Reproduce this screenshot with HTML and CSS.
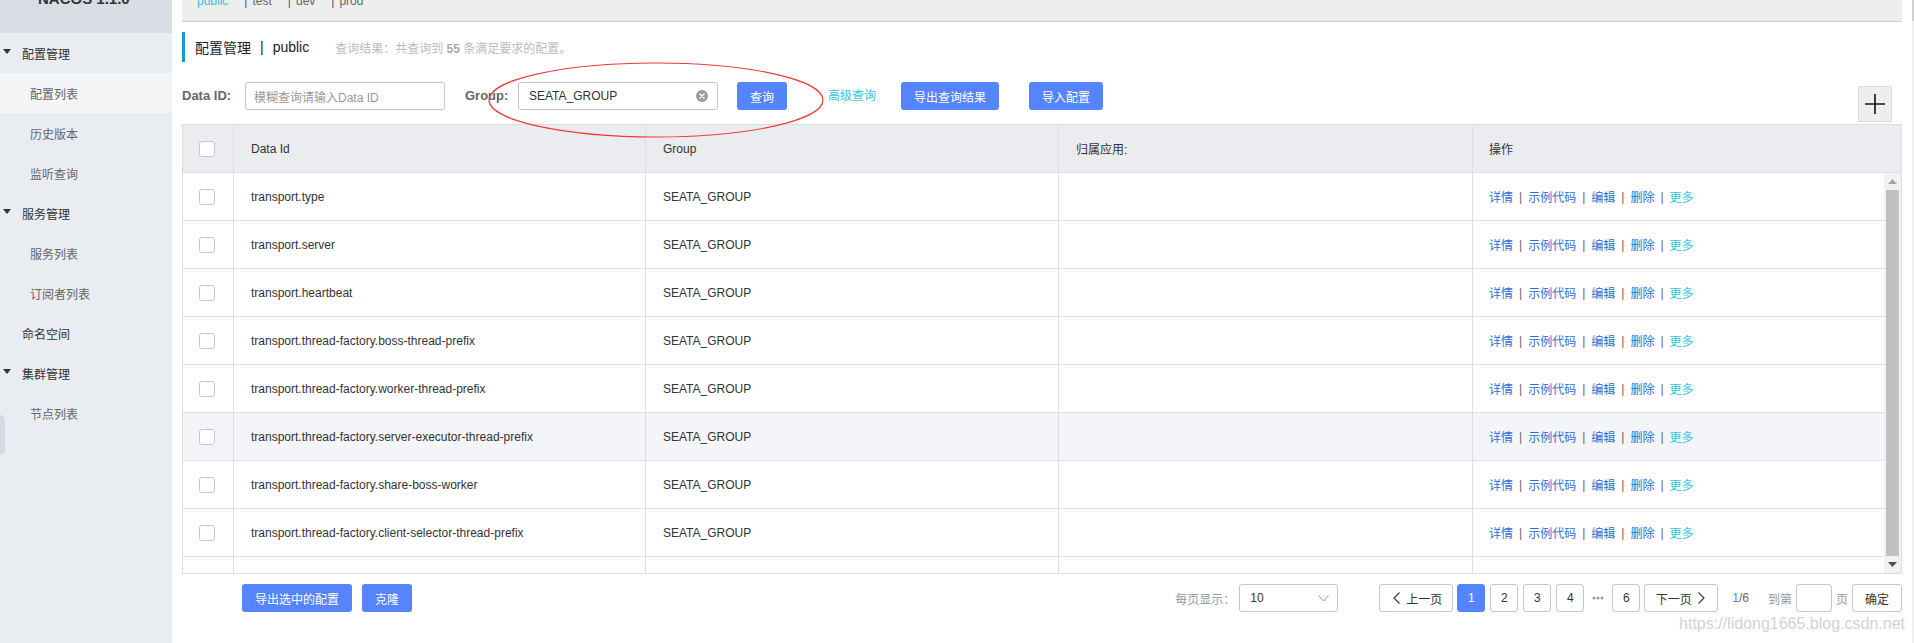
FILE: index.html
```html
<!DOCTYPE html>
<html lang="zh-CN">
<head>
<meta charset="utf-8">
<title>Nacos 配置管理</title>
<link rel="stylesheet" href="styles.css">
</head>
<body>
<aside class="sidebar">
  <div class="logo"><span class="logo-text">NACOS 1.1.0</span></div>
  <ul class="menu">
    <li class="group"><i class="caret"></i>配置管理</li>
    <li class="item active">配置列表</li>
    <li class="item">历史版本</li>
    <li class="item">监听查询</li>
    <li class="group"><i class="caret"></i>服务管理</li>
    <li class="item">服务列表</li>
    <li class="item">订阅者列表</li>
    <li class="group plain">命名空间</li>
    <li class="group"><i class="caret"></i>集群管理</li>
    <li class="item">节点列表</li>
  </ul>
  <div class="collapse-tab"></div>
</aside>

<main class="main">
  <div class="ns-bar">
    <div class="ns-list">
      <span class="ns active">public</span>
      <span class="ns-sep">|</span><span class="ns">test</span>
      <span class="ns-sep">|</span><span class="ns">dev</span>
      <span class="ns-sep">|</span><span class="ns">prod</span>
    </div>
  </div>

  <div class="page-title">
    <span class="title-main">配置管理</span>
    <span class="title-sep">|</span>
    <span class="title-ns">public</span>
    <span class="title-desc">查询结果：共查询到 <b>55</b> 条满足要求的配置。</span>
  </div>

  <div class="filters">
    <label class="f-label label-id">Data ID:</label>
    <div class="input"><span class="placeholder">模糊查询请输入Data ID</span></div>
    <label class="f-label label-group">Group:</label>
    <div class="input group-input">
      <span class="value">SEATA_GROUP</span>
      <svg class="clear" width="12" height="12" viewBox="0 0 12 12"><circle cx="6" cy="6" r="6" fill="#9b9b9b"/><path d="M3.9 3.9L8.1 8.1M8.1 3.9L3.9 8.1" stroke="#fff" stroke-width="1.4" stroke-linecap="round"/></svg>
    </div>
    <button class="btn primary btn-query">查询</button>
    <a class="adv">高级查询</a>
    <button class="btn primary btn-export">导出查询结果</button>
    <button class="btn primary btn-import">导入配置</button>
    <button class="plus-btn"><svg width="22" height="22" viewBox="0 0 22 22"><path d="M11 1V21M1 11H21" stroke="#1a1a1a" stroke-width="1.7"/></svg></button>
  </div>

  <div class="table">
    <div class="row head">
      <div class="cell cb-cell"><span class="cb"></span></div>
      <div class="cell">Data Id</div>
      <div class="cell">Group</div>
      <div class="cell">归属应用:</div>
      <div class="cell last">操作</div>
    </div>
    <div class="tbody">
      <div class="rows">
        <div class="row">
          <div class="cell cb-cell"><span class="cb"></span></div>
          <div class="cell">transport.type</div>
          <div class="cell">SEATA_GROUP</div>
          <div class="cell"></div>
          <div class="cell last ops"><a class="link">详情</a><span class="bar">|</span><a class="link">示例代码</a><span class="bar">|</span><a class="link">编辑</a><span class="bar">|</span><a class="link">删除</a><span class="bar">|</span><a class="link more">更多</a></div>
        </div>
        <div class="row">
          <div class="cell cb-cell"><span class="cb"></span></div>
          <div class="cell">transport.server</div>
          <div class="cell">SEATA_GROUP</div>
          <div class="cell"></div>
          <div class="cell last ops"><a class="link">详情</a><span class="bar">|</span><a class="link">示例代码</a><span class="bar">|</span><a class="link">编辑</a><span class="bar">|</span><a class="link">删除</a><span class="bar">|</span><a class="link more">更多</a></div>
        </div>
        <div class="row">
          <div class="cell cb-cell"><span class="cb"></span></div>
          <div class="cell">transport.heartbeat</div>
          <div class="cell">SEATA_GROUP</div>
          <div class="cell"></div>
          <div class="cell last ops"><a class="link">详情</a><span class="bar">|</span><a class="link">示例代码</a><span class="bar">|</span><a class="link">编辑</a><span class="bar">|</span><a class="link">删除</a><span class="bar">|</span><a class="link more">更多</a></div>
        </div>
        <div class="row">
          <div class="cell cb-cell"><span class="cb"></span></div>
          <div class="cell">transport.thread-factory.boss-thread-prefix</div>
          <div class="cell">SEATA_GROUP</div>
          <div class="cell"></div>
          <div class="cell last ops"><a class="link">详情</a><span class="bar">|</span><a class="link">示例代码</a><span class="bar">|</span><a class="link">编辑</a><span class="bar">|</span><a class="link">删除</a><span class="bar">|</span><a class="link more">更多</a></div>
        </div>
        <div class="row">
          <div class="cell cb-cell"><span class="cb"></span></div>
          <div class="cell">transport.thread-factory.worker-thread-prefix</div>
          <div class="cell">SEATA_GROUP</div>
          <div class="cell"></div>
          <div class="cell last ops"><a class="link">详情</a><span class="bar">|</span><a class="link">示例代码</a><span class="bar">|</span><a class="link">编辑</a><span class="bar">|</span><a class="link">删除</a><span class="bar">|</span><a class="link more">更多</a></div>
        </div>
        <div class="row hover">
          <div class="cell cb-cell"><span class="cb"></span></div>
          <div class="cell">transport.thread-factory.server-executor-thread-prefix</div>
          <div class="cell">SEATA_GROUP</div>
          <div class="cell"></div>
          <div class="cell last ops"><a class="link">详情</a><span class="bar">|</span><a class="link">示例代码</a><span class="bar">|</span><a class="link">编辑</a><span class="bar">|</span><a class="link">删除</a><span class="bar">|</span><a class="link more">更多</a></div>
        </div>
        <div class="row">
          <div class="cell cb-cell"><span class="cb"></span></div>
          <div class="cell">transport.thread-factory.share-boss-worker</div>
          <div class="cell">SEATA_GROUP</div>
          <div class="cell"></div>
          <div class="cell last ops"><a class="link">详情</a><span class="bar">|</span><a class="link">示例代码</a><span class="bar">|</span><a class="link">编辑</a><span class="bar">|</span><a class="link">删除</a><span class="bar">|</span><a class="link more">更多</a></div>
        </div>
        <div class="row">
          <div class="cell cb-cell"><span class="cb"></span></div>
          <div class="cell">transport.thread-factory.client-selector-thread-prefix</div>
          <div class="cell">SEATA_GROUP</div>
          <div class="cell"></div>
          <div class="cell last ops"><a class="link">详情</a><span class="bar">|</span><a class="link">示例代码</a><span class="bar">|</span><a class="link">编辑</a><span class="bar">|</span><a class="link">删除</a><span class="bar">|</span><a class="link more">更多</a></div>
        </div>
        <div class="row">
          <div class="cell cb-cell"><span class="cb"></span></div>
          <div class="cell">transport.thread-factory.worker-thread-size</div>
          <div class="cell">SEATA_GROUP</div>
          <div class="cell"></div>
          <div class="cell last ops"><a class="link">详情</a><span class="bar">|</span><a class="link">示例代码</a><span class="bar">|</span><a class="link">编辑</a><span class="bar">|</span><a class="link">删除</a><span class="bar">|</span><a class="link more">更多</a></div>
        </div>
      </div>
      <div class="scrollbar">
        <div class="sb-arrow"><svg width="9" height="5" viewBox="0 0 9 5"><path d="M0 5L4.5 0L9 5Z" fill="#a3a3a3"/></svg></div>
        <div class="sb-thumb"></div>
        <div class="sb-arrow"><svg width="9" height="5" viewBox="0 0 9 5"><path d="M0 0L4.5 5L9 0Z" fill="#505050"/></svg></div>
      </div>
    </div>
  </div>

  <div class="footer">
    <div class="footer-actions">
      <button class="btn primary">导出选中的配置</button>
      <button class="btn primary">克隆</button>
    </div>
    <div class="pager">
      <span class="per-page">每页显示：</span>
      <div class="select"><span>10</span><svg width="11" height="7" viewBox="0 0 11 7"><path d="M0.5 0.5L5.5 6L10.5 0.5" fill="none" stroke="#999" stroke-width="1"/></svg></div>
      <button class="pg prev"><svg width="7" height="12" viewBox="0 0 7 12"><path d="M6.5 0.5L1 6L6.5 11.5" fill="none" stroke="#333" stroke-width="1.1"/></svg>上一页</button>
      <button class="pg num first">1</button>
      <button class="pg num current-next">2</button>
      <button class="pg num">3</button>
      <button class="pg num">4</button>
      <span class="ellipsis"><svg width="12" height="4" viewBox="0 0 12 4"><circle cx="2" cy="2" r="1.5" fill="#999"/><circle cx="6" cy="2" r="1.5" fill="#999"/><circle cx="10" cy="2" r="1.5" fill="#999"/></svg></span>
      <button class="pg num">6</button>
      <button class="pg next">下一页<svg width="7" height="12" viewBox="0 0 7 12"><path d="M0.5 0.5L6 6L0.5 11.5" fill="none" stroke="#333" stroke-width="1.1"/></svg></button>
      <span class="pg-info"><em>1</em>/6</span>
      <span class="jump">到第</span>
      <div class="jump-input"></div>
      <span class="jump-unit">页</span>
      <button class="pg go">确定</button>
    </div>
  </div>
</main>

<div class="page-scroll"></div>
<svg class="annotation" width="344" height="86" viewBox="0 0 344 86"><ellipse cx="172" cy="45" rx="167" ry="37" fill="none" stroke="#ec3d3d" stroke-width="1.2"/></svg>
<div class="watermark">https://lidong1665.blog.csdn.net</div>
</body>
</html>
```

FILE: styles.css
```css
* { box-sizing: border-box; }
html, body { margin: 0; padding: 0; }
body {
  width: 1914px;
  height: 643px;
  overflow: hidden;
  position: relative;
  display: flex;
  background: #fff;
  color: #333;
  font-family: "Liberation Sans", "Noto Sans CJK SC", sans-serif;
  font-size: 12px;
}

/* Sidebar */
.sidebar {
  width: 172px;
  flex: none;
  height: 643px;
  background: #e9ecf1;
  position: relative;
}
.logo {
  height: 33px;
  background: #d8dce3;
  overflow: hidden;
  padding-left: 38px;
}
.logo-text {
  display: block;
  font-size: 15px;
  line-height: 15px;
  font-weight: bold;
  color: #333;
  margin-top: -9px;
}
.menu { list-style: none; margin: 0; padding: 0; }
.menu li {
  height: 40px;
  display: flex;
  align-items: center;
  font-size: 12px;
}
.menu .group { color: #333; padding-left: 3px; }
.menu .group.plain { padding-left: 22px; }
.menu .caret {
  width: 0; height: 0;
  border-left: 4px solid transparent;
  border-right: 4px solid transparent;
  border-top: 5px solid #333;
  margin-right: 11px;
  margin-top: -3px;
}
.menu .item { color: #666; padding-left: 30px; }
.menu .item.active { background: #f4f5f7; }
.collapse-tab {
  position: absolute;
  left: 0; top: 415px;
  width: 5px; height: 40px;
  background: #d6dae1;
  border-radius: 0 5px 5px 0;
}

/* Main */
.main {
  flex: 1;
  min-width: 0;
  padding: 0 10px 0 10px;
}
.page-scroll {
  width: 2px;
  flex: none;
  background: #f0f0f0;
  border-top: 21px solid #d0d0d0;
}
.ns-bar {
  height: 22px;
  background: #eeeeee;
  border-bottom: 1px solid #cfcfcf;
  overflow: hidden;
  padding-left: 15px;
}
.ns-list {
  display: flex;
  margin-top: -5px;
  line-height: 12px;
  font-size: 12px;
  color: #666;
}
.ns { margin-right: 16px; }
.ns.active { color: #33bde6; }
.ns-sep { margin-right: 5px; color: #555; }

.page-title {
  margin-top: 10px;
  height: 30px;
  border-left: 3px solid #129bd2;
  padding-left: 10px;
  display: flex;
  align-items: center;
  font-size: 14px;
  color: #222;
}
.title-sep { margin: 0 9px; }
.title-desc { margin-left: 26px; font-size: 12px; color: #bbb; }
.title-desc b { color: #aaa; }

.filters {
  margin-top: 20px;
  height: 40px;
  display: flex;
  align-items: flex-start;
}
.f-label {
  line-height: 28px;
  font-size: 13px;
  font-weight: bold;
  color: #666;
}
.label-id { width: 63px; }
.label-group { width: 53px; margin-left: 20px; }
.input {
  width: 200px;
  height: 28px;
  border: 1px solid #c4c6cf;
  border-radius: 3px;
  display: flex;
  align-items: center;
  padding: 0 9px 0 8px;
  background: #fff;
}
.placeholder { color: #999; }
.group-input { padding-left: 10px; }
.group-input .value { color: #333; }
.group-input .clear { margin-left: auto; }
.btn {
  height: 28px;
  border: none;
  border-radius: 3px;
  padding: 0 13px;
  font-family: inherit;
  font-size: 12px;
}
.btn.primary { background: #5584ff; color: #fff; }
.btn-query { margin-left: 19px; }
.adv { margin-left: 41px; line-height: 28px; color: #33c5e3; }
.btn-export { margin-left: 25px; }
.btn-import { margin-left: 30px; }
.plus-btn {
  margin-left: auto;
  margin-right: 10px;
  margin-top: 4px;
  width: 34px;
  height: 36px;
  background: #eee;
  border: 1px solid #dcdcdc;
  padding: 0;
  display: flex;
  align-items: center;
  justify-content: center;
}

/* Table */
.table {
  margin-top: 2px;
  border: 1px solid #dcdee3;
}
.row {
  display: grid;
  grid-template-columns: 51px 412px 413px 414px 1fr;
  height: 48px;
  border-bottom: 1px solid #dcdee3;
  background: #fff;
}
.row.head { background: #ebecf0; }
.row.hover { background: #f4f5f8; }
.cell {
  border-right: 1px solid #dcdee3;
  display: flex;
  align-items: center;
  padding-left: 17px;
  color: #333;
  white-space: nowrap;
  overflow: hidden;
}
.cell.last { border-right: none; padding-left: 16px; }
.cb-cell { padding-left: 16px; }
.cb {
  width: 16px;
  height: 16px;
  border: 1px solid #c4c6cf;
  border-radius: 3px;
  background: #fff;
}
.tbody {
  display: flex;
  height: 400px;
  overflow: hidden;
}
.rows { flex: 1; min-width: 0; }
.link { color: #2a6fd6; }
.link.more { color: #33c5e3; }
.bar { margin: 0 6px; color: #666; }
.scrollbar {
  width: 17px;
  flex: none;
  background: #f1f1f1;
  display: flex;
  flex-direction: column;
}
.sb-arrow {
  height: 17px;
  flex: none;
  display: flex;
  align-items: center;
  justify-content: center;
}
.sb-thumb {
  flex: 1;
  margin: 0 2px;
  background: #c1c1c1;
}

/* Footer */
.footer {
  margin-top: 10px;
  height: 28px;
  display: flex;
  align-items: center;
}
.footer-actions { margin-left: 60px; display: flex; gap: 10px; }
.pager { margin-left: auto; display: flex; align-items: center; }
.per-page { color: #999; }
.select {
  margin-left: 4px;
  width: 99px;
  height: 28px;
  border: 1px solid #c4c6cf;
  border-radius: 3px;
  display: flex;
  align-items: center;
  padding: 0 8px 0 10px;
  justify-content: space-between;
}
.pg {
  height: 28px;
  border: 1px solid #c4c6cf;
  border-radius: 3px;
  background: #fff;
  color: #333;
  font-family: inherit;
  font-size: 12px;
  padding: 0;
  display: flex;
  align-items: center;
  justify-content: center;
}
.pg.prev { margin-left: 41px; width: 74px; padding: 0 10px 0 13px; gap: 6px; }
.pg.num { width: 28px; margin-left: 5px; }
.pg.num.first { margin-left: 4px; background: #5584ff; border-color: #5584ff; color: #fff; }
.ellipsis { width: 18px; margin-left: 5px; display: flex; justify-content: center; }
.pg.next { margin-left: 4px; width: 74px; padding: 0 12px 0 10px; gap: 6px; }
.pg-info { margin-left: 14px; color: #666; }
.pg-info em { font-style: normal; color: #5584ff; }
.jump { margin-left: 19px; color: #999; }
.jump-input {
  margin-left: 4px;
  width: 36px;
  height: 28px;
  border: 1px solid #c4c6cf;
  border-radius: 3px;
}
.jump-unit { margin-left: 4px; color: #999; }
.pg.go { margin-left: 4px; width: 50px; }

/* Overlays */
.annotation {
  position: absolute;
  left: 484px;
  top: 55px;
}
.watermark {
  position: absolute;
  right: 9px;
  top: 614px;
  font-size: 16px;
  line-height: 20px;
  color: #d2d2d2;
}
```
